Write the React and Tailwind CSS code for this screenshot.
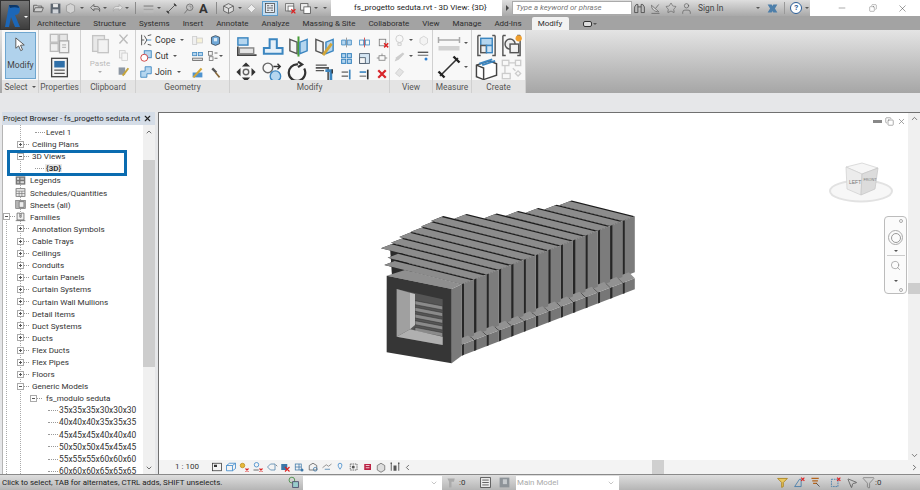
import React from 'react'
import { ChevronDown, ChevronUp, ChevronLeft, ChevronRight, X, Minus, Copy, Star, User, Search, Filter, MousePointer2 } from 'lucide-react'

const Ic = ({ s = 14, c = '', children }) => (
  <svg width={s} height={s} viewBox="0 0 16 16" fill="none" className={`shrink-0 ${c}`}>{children}</svg>
)

const Drop = ({ c = '' }) => <span className={`inline-block w-0 h-0 border-x-[2px] border-x-transparent border-t-[2px] border-t-[#555] shrink-0 ${c}`} />

const B = '#3c86c0'
const BF = '#b5d6ef'

/* quick access + ribbon icons */
const icons = {
  open: <path d="M2 12V4h4l1 1h5v2M2 12l2-5h10l-2 5z" stroke="#555" fill="#cfcfcf" />,
  save: <><rect x="2" y="2" width="12" height="12" fill="#5d6670" /><rect x="5" y="2.5" width="6" height="4" fill="#e8e8e8" /><rect x="4.5" y="9" width="7" height="5" fill="#cfd3d8" /></>,
  sync: <path d="M8 2l5 2.5v7L8 14l-5-2.5v-7z" stroke="#999" fill="#d4d4d4" />,
  undo: <path d="M6 3L2 7l4 4V8.5h4c2 0 3 1 3 3 1-4-1-6-4-6H6z" stroke="#555" fill="#ccc" />,
  redo: <path d="M10 3l4 4-4 4V8.5H6c-2 0-3 1-3 3-1-4 1-6 4-6h3z" stroke="#aaa" fill="#e2e2e2" />,
  thin: <><path d="M2 5h12" stroke="#999" strokeWidth="2" /><path d="M2 9h12" stroke="#999" /><path d="M2 12h12" stroke="#bbb" strokeWidth="2" /></>,
  measure: <><path d="M3 13L13 3" stroke="#444" /><path d="M2 11l3 3M11 2l3 3" stroke="#333" strokeWidth="1.5" /></>,
  tag: <><circle cx="9.5" cy="6.5" r="4" stroke="#666" /><path d="M7 9l-4 5" stroke="#666" /><path d="M8 5h3v3" stroke="#888" /></>,
  home3d: <><path d="M8 2l6 3v6l-6 3-6-3V5z" stroke="#555" fill="#ddd" /><path d="M2 5l6 3 6-3M8 8v6" stroke="#555" /></>,
  section: <path d="M8 3l5 5-5 5-5-5z" stroke="#aaa" fill="#eee" />,
  thinList: <><rect x="2" y="2" width="12" height="12" stroke="#444" fill="#e8eef5" /><path d="M4 5h3M9 5h3M4 8h8M4 11h3M9 11h3" stroke="#333" /></>,
  close: <><rect x="2" y="2" width="10" height="9" stroke="#666" fill="#eee" /><rect x="5" y="5" width="7" height="6" stroke="#666" fill="#fff" /><path d="M9 9l5 5M14 9l-5 5" stroke="#d22" strokeWidth="1.6" /></>,
  windows: <><rect x="2" y="2" width="9" height="8" stroke="#555" fill="#eee" /><rect x="6" y="6" width="8" height="8" stroke="#555" fill="#fff" /></>,
  binoc: <><path d="M2 13V6l2-3h2v10zM14 13V6l-2-3h-2v10z" stroke="#444" fill="#bbb" /><path d="M6 6h4" stroke="#444" /></>,
  dish: <><path d="M3 4c0 5 4 8 9 8z" stroke="#666" fill="#ddd" /><path d="M8 8l4-5M3 14h10" stroke="#666" /></>,
  xchg: <path d="M2 3h5l1 2 1-2h5l-3 5 3 5H9l-1-2-1 2H2l3-5z" fill="#4d7faa" />,
  cursor: <path d="M3 1l0 11 3-2.5 2.2 5 2-.9-2.2-4.8 4-.3z" stroke="#555" fill="#fff" />,
  props: <><rect x="2" y="1" width="12" height="14" stroke="#444" fill="#f4f4f4" /><rect x="4" y="3" width="8" height="5" fill="#2f6fa8" /><path d="M4 10h8M4 12.5h8" stroke="#555" /></>,
  typeProps: <><rect x="1" y="1" width="6" height="6" stroke="#bbb" fill="#eee" /><rect x="8" y="1" width="6" height="6" stroke="#bbb" fill="#e6e6e6" /><rect x="1" y="8" width="6" height="6" stroke="#bbb" fill="#eee" /><rect x="8" y="6" width="7" height="9" stroke="#aaa" fill="#f2f2f2" /><path d="M10 9h3M10 11h3" stroke="#bbb" /></>,
  paste: <><rect x="2" y="2" width="9" height="12" stroke="#c4c4c4" fill="#e8e8e8" /><rect x="6" y="5" width="8" height="10" stroke="#c4c4c4" fill="#f2f2f2" /></>,
  cut: <path d="M3 2l10 11M13 2L3 13" stroke="#bbb" strokeWidth="1.8" />,
  copy: <><rect x="3" y="2" width="7" height="9" stroke="#ccc" fill="#f2f2f2" /><rect x="6" y="5" width="7" height="9" stroke="#ccc" fill="#f6f6f6" /></>,
  match: <><rect x="2" y="3" width="8" height="9" fill="#8d97a3" /><path d="M7 13L14 4" stroke="#c8a63a" strokeWidth="2.4" /></>,
  cope: <><path d="M3 2v12M3 8h3M6 3l3 5-3 5" stroke="#444" /><path d="M10 3l4-1M10 13l4 1" stroke="#444" /><path d="M9 8h5" stroke={B} /></>,
  cutG: <><rect x="6" y="2" width="8" height="8" stroke={B} fill={BF} /><circle cx="6" cy="10" r="4" stroke="#c33" fill="#fff" /></>,
  join: <path d="M7 2h7v8H9v4H2V7h5z" stroke={B} fill={BF} />,
  wall: <><rect x="2" y="3" width="5" height="10" stroke="#ccc" fill="#f0f0f0" /><rect x="7" y="5" width="7" height="6" stroke="#ccc" fill="#f7f2d8" /></>,
  face: <><path d="M3 4l5-2 5 2v8l-5 2-5-2z" stroke="#345" fill="#6ea6d6" /><rect x="6" y="5" width="4" height="4" fill="#dbeaf6" /></>,
  split: <><rect x="2" y="3" width="5" height="4" stroke={B} fill={BF} /><rect x="9" y="3" width="5" height="4" stroke={B} fill={BF} /><rect x="2" y="10" width="12" height="3" stroke="#666" fill="#ddd" /></>,
  wallj: <><rect x="2" y="2" width="5" height="5" stroke="#666" /><rect x="3" y="9" width="5" height="5" stroke="#666" /><path d="M10 4h4M10 11h4" stroke="#444" /></>,
  paintH: <><rect x="2" y="8" width="12" height="6" fill="#4f93cf" /><path d="M3 14L13 3" stroke="#d2a63a" strokeWidth="2.6" /></>,
  hammer: <><path d="M4 3l5 5" stroke="#555" strokeWidth="3" /><path d="M8 8l5 6" stroke="#8a6a3a" strokeWidth="2" /></>,
  align: <><rect x="2" y="2" width="7" height="5" stroke={B} fill={BF} /><path d="M2 8v6h13" stroke="#444" strokeWidth="1.2" /><rect x="3" y="9" width="10" height="4" fill="#e4e4e4" stroke="#888" /></>,
  offset: <path d="M2 13V9h4V3h5v6h4v4z" stroke={B} fill="#e6f0f8" strokeWidth="1.4" />,
  mirror1: <><path d="M2 3l5 2v8l-5-2z" stroke="#555" fill="#f5f5f5" /><path d="M8 1v14" stroke="#4a9d3a" strokeWidth="1.4" /><path d="M14 3l-5 2v8l5-2z" stroke={B} fill={BF} /></>,
  mirror2: <><path d="M2 3l5 2v8l-5-2z" stroke="#555" fill="#f5f5f5" /><path d="M14 3l-5 2v8l5-2z" stroke={B} fill={BF} /><path d="M7 14l6-8" stroke="#d2a63a" strokeWidth="2" /></>,
  move: <><path d="M8 1l3 3H5zM8 15l-3-3h6zM1 8l3-3v6zM15 8l-3 3V5z" fill="#333" /><circle cx="8" cy="8" r="2" stroke="#666" /></>,
  copyM: <><circle cx="5" cy="5" r="3.5" stroke="#666" /><circle cx="10.5" cy="11" r="3.8" stroke={B} fill={BF} /><path d="M9 4h5M12 2l2 2-2 2" stroke="#333" /></>,
  rotate: <path d="M12.5 5.500A6 6 0 1 1 8 2.500M8 .5l3 2-3 2" stroke="#333" strokeWidth="1.6" />,
  trim: <><path d="M2 5h9v10" stroke="#555" strokeWidth="1.2" /><path d="M2 3h8M2 7h6" stroke="#555" /><path d="M9 7h4v8" stroke={B} strokeWidth="2" /><path d="M14 9V6" stroke="#333" /></>,
  sm1: <><path d="M8 2v12" stroke="#888" /><path d="M2 5h5v6H2zM9 5h5v6H9z" stroke={B} fill={BF} /></>,
  sm2: <><path d="M8 2v12" stroke="#c33" /><rect x="2" y="5" width="5" height="6" stroke={B} /><rect x="9" y="5" width="5" height="6" stroke={B} /></>,
  sm3: <><rect x="4" y="4" width="8" height="8" stroke="#777" /><path d="M10 9l5 5M15 9l-5 5" stroke="#d22" strokeWidth="1.8" /></>,
  array: <><rect x="2" y="2" width="5" height="5" stroke={B} fill={BF} strokeWidth="1.3" /><rect x="9" y="2" width="5" height="5" stroke={B} fill={BF} strokeWidth="1.3" /><rect x="2" y="9" width="5" height="5" stroke={B} fill={BF} strokeWidth="1.3" /><rect x="9" y="9" width="5" height="5" stroke={B} fill={BF} strokeWidth="1.3" /></>,
  scale: <><rect x="2" y="2" width="12" height="12" stroke="#456" fill="#d5e6f3" /><rect x="2" y="7" width="7" height="7" stroke="#456" fill="#f5f5f5" /></>,
  pin: <><rect x="4" y="5" width="8" height="6" stroke="#777" /><path d="M1 8h3M12 8h3M8 2v3" stroke="#777" /></>,
  tr1: <><path d="M2 5h8M2 10h8" stroke="#333" strokeWidth="1.2" /><path d="M12 2v12" stroke={B} strokeWidth="2" /></>,
  tr2: <><path d="M2 5h8" stroke={B} strokeWidth="2" /><path d="M2 10h8" stroke="#333" /><path d="M12 2v12" stroke="#333" strokeWidth="2" /></>,
  del: <path d="M3 3l10 10M13 3L3 13" stroke="#d8262c" strokeWidth="3" />,
  bulb: <><circle cx="8" cy="6" r="4.500" stroke="#c8c8c8" fill="#f8f8f8" /><path d="M6 11h4v3H6z" stroke="#c8c8c8" /></>,
  boxes: <path d="M4 6l5-3 5 3v6l-5 3-5-3z" stroke="#ccc" fill="#f3f3f3" />,
  pen: <path d="M2 14l2-5 8-6 2 2-7 7z" fill="#cdcdcd" />,
  lines: <><path d="M1 3h14" stroke="#333" strokeWidth="1.5" /><path d="M1 7h14" stroke="#555" strokeWidth="1.2" /><circle cx="12" cy="12" r="2" fill="#2f7fd0" /></>,
  eraser: <path d="M3 9l5-6 5 4-5 6z" stroke="#ccc" fill="#e4e4e4" />,
  dim: <><path d="M1 6h14M1 4v4M15 4v4" stroke="#aaa" /><rect x="1" y="10" width="14" height="3" fill="#d2d2d2" /></>,
  tape: <><path d="M2 14L14 2" stroke="#333" strokeWidth="1.1" /><path d="M1 11l4 4M11 1l4 4" stroke="#222" strokeWidth="1.6" /></>,
  parts: <><path d="M2 1h2M2 1v14h2M14 1h-2M14 1v14h-2" stroke="#555" /><rect x="4" y="3" width="8" height="5" stroke={B} fill={BF} /><rect x="4" y="8" width="4" height="5" stroke="#555" fill="#eee" /><rect x="8" y="8" width="4" height="5" stroke={B} fill="#cfe3f3" /></>,
  group: <><path d="M2 1h2M2 1v14h2M14 1h-2M14 1v14h-2" stroke="#555" /><circle cx="7" cy="7" r="3.500" stroke="#555" fill="#eee" /><rect x="7" y="7" width="6" height="6" stroke="#555" fill="#f2f2f2" /><circle cx="13" cy="3" r="2.200" fill="#f0a030" /></>,
  stack: <><path d="M1 5l9-3 5 2v8l-9 3-5-2z" stroke="#444" fill="#fff" /><path d="M3 4l9-3M5 5l9-3" stroke={B} strokeWidth="1.3" /><path d="M1 5l5 2v8" stroke="#444" /></>,
  flow: <><rect x="1" y="1" width="5" height="4" stroke="#ccc" /><rect x="11" y="1" width="4" height="4" stroke="#ccc" /><rect x="1" y="11" width="6" height="4" stroke="#ccc" /><path d="M11 11l2-2 2 2-2 2z" stroke="#ccc" /><path d="M6 3h5M3 5v6M9 7l2 2" stroke="#ccc" /></>,
}

const Q = ({ n, s = 13, c = '' }) => <Ic s={s} c={c}>{icons[n]}</Ic>

function PanelLabel({ children, drop }) {
  return (
    <div className="h-[13px] pt-[1px] bg-[#e4e4e4] flex items-center justify-center gap-1 text-[8.4px] leading-none text-[#555] shrink-0 whitespace-nowrap">
      {children}
      {drop && <Drop />}
    </div>
  )
}

function Panel({ w, label, drop, children, c = '' }) {
  return (
    <div className={`flex flex-col h-full bg-[#f8f8f8] border-r border-[#d0d0d0] shrink-0 ${w}`}>
      <div className={`flex-1 min-h-0 ${c}`}>{children}</div>
      <PanelLabel drop={drop}>{label}</PanelLabel>
    </div>
  )
}

const tabs = ['Architecture', 'Structure', 'Systems', 'Insert', 'Annotate', 'Analyze', 'Massing & Site', 'Collaborate', 'View', 'Manage', 'Add-Ins']

function TopBar() {
  return (
    <div className="flex h-[30px] shrink-0 bg-[#a3a3a3]">
      <div className="w-[30px] h-[30px] bg-gradient-to-b from-[#777] to-[#3d3d3d] border border-[#333] flex items-center pl-[3px] shrink-0">
        <svg width="18" height="25" viewBox="0 0 18 25">
          <path d="M1 24L5 2h6c5 0 6 4 4 8-1 1-2 2-4 2l5 12h-5L7 14l-2 10z" fill="#1c67b8" />
          <path d="M5 2h6c3 0 4 1 4 3-3-1-6-1-9 0z" fill="#0d3768" />
        </svg>
        <Drop c="ml-[2px] mt-[3px] border-t-white" />
      </div>
      <div className="flex-1 flex flex-col min-w-0">
        <div className="h-[16px] flex bg-white">
          <div className="w-[301px] h-full bg-gradient-to-b from-[#dedede] to-[#a9a9a9] flex items-center pl-[2px] gap-[1px]">
            <Q n="open" /><Q n="save" c="ml-[3px]" /><Q n="sync" c="ml-[1px]" /><Drop c="mx-[2px]" /><Q n="undo" c="ml-[2px]" /><Drop /><Q n="redo" c="ml-[3px]" /><Drop />
            <span className="w-px h-[12px] bg-[#8a8a8a] mx-[5px]" />
            <Q n="thin" /><Drop c="mx-[1px]" /><Q n="measure" c="ml-[2px]" /><Q n="tag" c="ml-[3px]" />
            <span className="text-[13px] leading-none font-bold text-[#333] mx-[3px]">A</span>
            <span className="w-px h-[12px] bg-[#8a8a8a] mx-[4px]" />
            <Q n="home3d" /><Drop c="mx-[2px]" /><Q n="section" />
            <span className="ml-[3px] bg-[#c2dcf1] border border-[#5d9ccb] h-[15px] w-[16px] flex items-center justify-center"><Q n="thinList" s={12} /></span>
            <Q n="close" c="ml-[5px]" /><Q n="windows" c="ml-[1px]" /><Drop c="ml-[1px]" /><Drop c="ml-[4px]" />
          </div>
          <div className="w-[171px] flex items-center pl-[23px] text-[8px] leading-none text-[#222] whitespace-nowrap">fs_progetto seduta.rvt - 3D View: {'{3D}'}</div>
          <div className="w-[308px] h-full bg-gradient-to-b from-[#dedede] to-[#a9a9a9] flex items-center shrink-0">
            <span className="w-[10px] flex justify-center"><span className="w-0 h-0 border-y-[3px] border-y-transparent border-l-[3px] border-l-[#444]" /></span>
            <div className="w-[120px] h-[14px] bg-white border border-[#aaa] flex items-center pl-[3px] text-[7.8px] leading-none italic text-[#777] whitespace-nowrap">Type a keyword or phrase</div>
            <Q n="binoc" c="ml-[1px]" /><Q n="dish" c="ml-[3px]" />
            <Star size={12} strokeWidth={1} className="ml-[3px] text-[#444] shrink-0" /><User size={13} strokeWidth={1} className="ml-[3px] text-[#444] shrink-0" />
            <span className="ml-[5px] text-[8.4px] leading-none text-[#444] whitespace-nowrap">Sign In</span>
            <Drop c="ml-[33px]" /><Q n="xchg" c="ml-[6px]" />
            <span className="w-px h-[12px] bg-[#999] ml-[5px]" />
            <span className="ml-[5px] w-[12px] h-[12px] rounded-full border border-[#2b5d96] bg-white text-[8px] leading-none font-bold text-[#2b5d96] flex items-center justify-center shrink-0">?</span>
            <Drop c="ml-[3px]" />
          </div>
          <div className="flex-1 flex items-center text-[#333]">
            <Minus size={10} strokeWidth={1} className="ml-[27px]" />
            <Copy size={8} strokeWidth={1} className="ml-[22px] -scale-x-100" />
            <X size={11} strokeWidth={1} className="ml-[20px]" />
          </div>
        </div>
        <div className="h-[14px] flex items-end text-[8px] leading-none text-[#2e2e2e] whitespace-nowrap pl-[7px] gap-[13px]">
          {tabs.map((t) => <span key={t} className="pb-[2px]">{t}</span>)}
          <span className="w-[37px] h-[13px] bg-[#f2f2f2] rounded-t-[2px] flex items-center justify-center -ml-[3px]">Modify</span>
          <span className="ml-[1px] pb-[3px] flex items-center gap-[1px]"><span className="w-[9px] h-[6px] rounded-[2px] border border-[#333] bg-[#ddd]" /><Drop /></span>
        </div>
      </div>
    </div>
  )
}

const Row3 = ({ n, label }) => (
  <div className="flex items-center h-[16px] gap-[2px]">
    <Q n={n} s={14} />
    <span className="text-[8.8px] leading-none text-[#333]">{label}</span>
    <Drop c="ml-[3px]" />
  </div>
)

function Ribbon() {
  return (
    <div className="h-[63px] shrink-0 flex bg-gradient-to-b from-[#e4e4e4] to-[#a6a6a6] pl-[2px]">
      <Panel w="w-[37px]" label="Select" drop c="p-[2px_2px_0_3px]">
        <div className="h-[47px] bg-[#b0d2ec] border border-[#6fa6cf] flex flex-col items-center pt-[4px]">
          <Q n="cursor" s={15} />
          <span className="text-[8.6px] leading-none text-[#444] mt-[9px]">Modify</span>
        </div>
      </Panel>
      <Panel w="w-[42px]" label="Properties" c="flex flex-col items-center pt-[3px] gap-[3px]">
        <Q n="typeProps" s={21} />
        <Q n="props" s={21} />
      </Panel>
      <Panel w="w-[55px]" label="Clipboard" c="flex pl-[8px] pt-[3px]">
        <div className="flex flex-col items-center w-[22px]">
          <Q n="paste" s={21} />
          <span className="text-[8px] leading-none text-[#bbb] mt-[6px]">Paste</span>
          <Drop c="mt-[3px] border-t-[#aaa]" />
        </div>
        <div className="flex flex-col ml-[6px] gap-[3px]">
          <Q n="cut" /><Q n="copy" /><Q n="match" />
        </div>
      </Panel>
      <Panel w="w-[94px]" label="Geometry" c="flex pl-[3px] pt-[2px]">
        <div className="flex flex-col w-[48px]">
          <Row3 n="cope" label="Cope" /><Row3 n="cutG" label="Cut" /><Row3 n="join" label="Join" />
        </div>
        <div className="grid grid-cols-[20px_16px] auto-rows-[16px] items-center justify-items-center">
          <Q n="wall" /><Q n="face" />
          <Q n="split" /><span className="flex items-center"><Q n="wallj" s={12} /><Drop /></span>
          <Q n="paintH" /><Q n="hammer" />
        </div>
      </Panel>
      <Panel w="w-[160px]" label="Modify" c="flex pl-[3px] pt-[4px]">
        <div className="grid grid-cols-[26px_26px_26px_26px] auto-rows-[25px] justify-items-center items-center">
          <Q n="align" s={23} /><Q n="offset" s={23} /><Q n="mirror1" s={23} /><Q n="mirror2" s={23} />
          <Q n="move" s={22} /><Q n="copyM" s={22} /><Q n="rotate" s={22} /><Q n="trim" s={22} />
        </div>
        <div className="grid grid-cols-[17px_18px_18px] auto-rows-[16px] justify-items-center items-center ml-[1px]">
          <Q n="sm1" /><Q n="sm2" /><Q n="sm3" s={13} />
          <Q n="array" /><Q n="scale" /><Q n="pin" s={12} />
          <Q n="tr1" /><Q n="tr2" /><Q n="del" s={12} />
        </div>
      </Panel>
      <Panel w="w-[43px]" label="View" c="flex flex-col pl-[3px] pt-[2px]">
        <div className="flex items-center h-[16px]"><Q n="bulb" /><Drop c="ml-[3px]" /><Q n="boxes" s={12} c="ml-[4px]" /></div>
        <div className="flex items-center h-[16px]"><Q n="pen" /><Drop c="ml-[3px]" /><Q n="lines" s={12} c="ml-[4px]" /></div>
        <div className="flex items-center h-[16px]"><Q n="eraser" /></div>
      </Panel>
      <Panel w="w-[39px]" label="Measure" c="flex flex-col pl-[4px] pt-[3px]">
        <div className="flex items-center h-[20px]"><Q n="dim" s={24} /><Drop c="ml-[3px]" /></div>
        <div className="flex items-center mt-[3px] h-[22px]"><Q n="tape" s={24} /><Drop c="ml-[3px]" /></div>
      </Panel>
      <Panel w="w-[54px]" label="Create" c="grid grid-cols-[25px_25px] auto-rows-[24px] pl-[2px] pt-[3px] items-center justify-items-center">
        <Q n="parts" s={23} /><Q n="group" s={23} />
        <Q n="stack" s={23} /><Q n="flow" s={21} />
      </Panel>
    </div>
  )
}

const tree = [
  ['l3', 'Level 1'], ['p', 'Ceiling Plans'], ['m', '3D Views'], ['sel', '{3D}'],
  ['i', 'Legends', 'legend'], ['i', 'Schedules/Quantities', 'sched'], ['i', 'Sheets (all)', 'sheet'], ['f', 'Families', 'fam'],
  ['p', 'Annotation Symbols'], ['p', 'Cable Trays'], ['p', 'Ceilings'], ['p', 'Conduits'], ['p', 'Curtain Panels'], ['p', 'Curtain Systems'],
  ['p', 'Curtain Wall Mullions'], ['p', 'Detail Items'], ['p', 'Duct Systems'], ['p', 'Ducts'], ['p', 'Flex Ducts'], ['p', 'Flex Pipes'], ['p', 'Floors'],
  ['m', 'Generic Models'], ['m2', 'fs_modulo seduta'],
  ['t', '35x35x35x30x30x30'], ['t', '40x40x40x35x35x35'], ['t', '45x45x45x40x40x40'], ['t', '50x50x50x45x45x45'], ['t', '55x55x55x60x60x60'], ['t', '60x60x60x65x65x65'],
]

const Exp = ({ open }) => (
  <span className="w-[7px] h-[7px] border border-[#aaa] bg-white shrink-0 relative">
    <span className="absolute left-[1px] right-[1px] top-[2px] h-px bg-[#555]" />
    {!open && <span className="absolute top-[1px] bottom-[1px] left-[2px] w-px bg-[#555]" />}
  </span>
)

const Dash = ({ w }) => <span className={`border-t border-dotted border-[#999] shrink-0 ${w}`} />

const TreeIcon = ({ k }) => (
  <Ic s={11}>
    {k === 'legend' && <><rect x="1" y="2" width="14" height="12" fill="#777" /><rect x="3" y="4" width="3" height="3" fill="#ddd" /><rect x="8" y="4" width="5" height="3" fill="#bbb" /><rect x="3" y="9" width="3" height="3" fill="#bbb" /><rect x="8" y="9" width="5" height="3" fill="#ddd" /></>}
    {k === 'sched' && <><rect x="1.5" y="2.5" width="13" height="11" stroke="#555" fill="#eee" /><path d="M1.5 6h13M1.5 9.5h13M6 6v8M10 6v8" stroke="#777" /></>}
    {k === 'sheet' && <><rect x="1" y="2" width="14" height="12" fill="#b5b5b5" stroke="#777" /><rect x="6" y="4" width="7" height="8" fill="#eee" stroke="#666" /></>}
    {k === 'fam' && <><path d="M3 13V3h4v6h2V3h4v10z" stroke="#555" fill="#f2f2f2" /><path d="M1 14h14" stroke="#555" /></>}
  </Ic>
)

function TreeRow({ row }) {
  const [k, label, icon] = row
  return (
    <div className="h-[12.12px] flex items-center text-[8.1px] leading-none text-[#333] whitespace-nowrap">
      {k === 'l3' && <><span className="w-[32px]" /><Dash w="w-[10px]" /><span className="ml-[1px]">{label}</span></>}
      {k === 'p' && <><span className="w-[14px]" /><Exp /><Dash w="w-[5px]" /><span className="ml-[3px]">{label}</span></>}
      {k === 'm' && <><span className="w-[14px]" /><Exp open /><Dash w="w-[5px]" /><span className="ml-[3px]">{label}</span></>}
      {k === 'sel' && <><span className="w-[32px]" /><Dash w="w-[9px]" /><span className="ml-[1px] px-[1px] bg-[#e8e8e8] font-bold">{label}</span></>}
      {k === 'i' && <><span className="w-[12px]" /><TreeIcon k={icon} /><span className="ml-[4px]">{label}</span></>}
      {k === 'f' && <><span className="w-[0px]" /><Exp open /><Dash w="w-[5px]" /><TreeIcon k={icon} /><span className="ml-[4px]">{label}</span></>}
      {k === 'm2' && <><span className="w-[27px]" /><Exp open /><Dash w="w-[5px]" /><span className="ml-[4px]">{label}</span></>}
      {k === 't' && <><span className="w-[45px]" /><Dash w="w-[10px]" /><span className="ml-[1px] text-[8.4px]">{label}</span></>}
    </div>
  )
}

function ProjectBrowser() {
  return (
    <div className="w-[153px] ml-[2px] shrink-0 flex flex-col relative">
      <div className="h-[13px] bg-[#d5dde7] flex items-center justify-between pl-[1px] pr-[3px] text-[7.8px] leading-none text-[#222] whitespace-nowrap">
        <span>Project Browser - fs_progetto seduta.rvt</span>
        <X size={9} strokeWidth={3} className="text-[#222] shrink-0" />
      </div>
      <div className="flex-1 min-h-0 flex bg-white border-l border-[#b5b5b5]">
        <div className="flex-1 min-w-0 overflow-hidden relative pt-[1px]">
          <span className="absolute left-[17px] top-0 bottom-0 border-l border-dotted border-[#aaa]" />
          <span className="absolute left-[3px] top-[96px] bottom-0 border-l border-dotted border-[#aaa]" />
          <div className="relative">
            {tree.map((r) => <TreeRow key={r[1]} row={r} />)}
          </div>
        </div>
        <div className="w-[12px] shrink-0 bg-[#f0f0f0] flex flex-col items-center justify-between pt-[3px] pb-[2px]">
          <ChevronUp size={8} strokeWidth={2.5} className="text-[#555] shrink-0" />
          <div className="absolute right-[0px] top-[48px] w-[12px] h-[207px] bg-[#cdcdcd]" />
          <ChevronDown size={8} strokeWidth={2.5} className="text-[#555] shrink-0" />
        </div>
      </div>
      <div className="absolute left-[5px] top-[38px] w-[120px] h-[26px] border-[3px] border-[#0b6cb0]" />
    </div>
  )
}

/* left end (x) of each slat's top face, front frame first */
const leftEnds = [80, 90, 70, 100, 125, 160, 190, 220, 290, 380, 445, 505, 560, 605]

function Model() {
  const R = (i) => [275 + i * 37.1, 283 - i * 14.6]
  const bottom = (x) => 497 - 0.383 * (x - 275)
  const h = 168
  const slope = 0.25
  const slats = []
  for (let i = 13; i >= 0; i--) {
    const a = R(i + 1)
    const b = R(i)
    const L = a[0] - leftEnds[i]
    const p = [a[0] - L, a[1] - slope * L]
    const q = [b[0] - L, b[1] - slope * L]
    const m = [a[0] - 6, a[1] + 2.4]
    const n = [p[0] - 6, p[1] + 2.4]
    const bA = bottom(a[0])
    const bB = bottom(b[0])
    const side = 33
    slats.push(
      <g key={i}>
        {/* top strip */}
        <polygon points={`${a[0]},${a[1]} ${b[0]},${b[1]} ${q[0]},${q[1]} ${p[0]},${p[1]}`} fill="#1c1c1c" />
        <polygon points={`${m[0]},${m[1]} ${b[0]},${b[1]} ${q[0]},${q[1]} ${n[0]},${n[1]}`} fill="#8c8c8c" />
        {/* right face */}
        <polygon points={`${b[0]},${b[1]} ${a[0]},${a[1]} ${a[0]},${a[1] + h} ${b[0]},${b[1] + h}`} fill="#7c7c7c" />
        <polygon points={`${b[0]},${b[1]} ${b[0] + 7},${b[1] - 2.8} ${b[0] + 7},${b[1] + h - 2.8} ${b[0]},${b[1] + h}`} fill="#262626" />
        {/* step at the foot */}
        <polygon points={`${b[0]},${bB - side} ${a[0]},${bA - side} ${a[0]},${bA} ${b[0]},${bB}`} fill="#777" />
        <polygon points={`${b[0]},${bB - side} ${b[0] + 7},${bB - side - 2.7} ${b[0] + 7},${bB - 2.7} ${b[0]},${bB}`} fill="#2a2a2a" />
        <polygon points={`${b[0]},${bB - side} ${a[0]},${bA - side} ${a[0] - 18},${a[1] + h} ${b[0] - 18},${b[1] + h}`} fill="#929292" />
        <path d={`M${b[0]} ${bB - side}L${b[0] - 18} ${b[1] + h}`} stroke="#1c1c1c" strokeWidth="3" />
      </g>
    )
  }
  return (
    <svg width="280" height="180" viewBox="0 0 840 540" className="shrink-0">
      <polygon points="60,172 92,162 130,250 66,258" fill="#2b2b2b" />
      {slats}
      {/* front frame */}
      <polygon points="245,297 275,283 275,497 245,520" fill="#7a7a7a" />
      <polygon points="50,257 105,240 275,283 245,297" fill="#8f8f8f" />
      <polygon points="50,257 245,297 245,520 50,487" fill="#363636" />
      <polygon points="80,297 218,328 218,465 80,440" fill="#555" />
      {[0, 1, 2, 3, 4].map((n) => (
        <polygon key={n} points={`135,${332 + n * 20} 218,${348 + n * 20} 218,${360 + n * 20} 135,${344 + n * 20}`} fill="#8a8a8a" stroke="#2d2d2d" strokeWidth="1.5" />
      ))}
      <polygon points="120,308 135,312 135,405 120,418" fill="#c2c2c2" />
      <polygon points="80,440 120,418 218,440 218,465" fill="#b0b0b0" />
      <polygon points="80,297 120,308 120,418 80,440" fill="#a0a0a0" />
    </svg>
  )
}

function ViewCube() {
  return (
    <svg width="72" height="46" viewBox="0 0 72 46" className="absolute right-[11px] top-[47px]">
      <ellipse cx="36" cy="31" rx="31" ry="10.500" fill="#f7f7f7" stroke="#e2e2e2" strokeWidth="2" />
      <path d="M21 7l16-4 16 5-16 6z" fill="#f6f6f6" stroke="#cfcfcf" strokeWidth=".7" />
      <path d="M21 7l16 7-1 21-14-6z" fill="#ececec" stroke="#cfcfcf" strokeWidth=".7" />
      <path d="M37 14l16-6-3 21-14 6z" fill="#dcdcdc" stroke="#c4c4c4" strokeWidth=".7" />
      <text x="24" y="24" fontSize="5" fill="#777" fontFamily="Liberation Sans, sans-serif">LEFT</text>
      <text x="38.500" y="21" fontSize="3.800" fill="#777" fontFamily="Liberation Sans, sans-serif">FRONT</text>
    </svg>
  )
}

function NavBar() {
  return (
    <div className="absolute right-[1px] top-[103px] w-[23px] h-[78px] border border-[#bcbcbc] rounded-[4px] bg-[#fbfbfb] flex flex-col items-center pt-[2px]">
      <span className="self-end mr-[3px] w-[4px] h-[4px] rounded-full border border-[#aaa]" />
      <span className="mt-[7px] w-[15px] h-[15px] rounded-full border border-[#aaa] flex items-center justify-center"><span className="w-[10px] h-[10px] rounded-full border border-[#999]" /></span>
      <Drop c="mt-[5px]" />
      <span className="w-[18px] h-px bg-[#ccc] mt-[3px]" />
      <Search size={11} strokeWidth={1.2} className="mt-[4px] text-[#777]" />
      <Drop c="mt-[9px]" />
      <span className="self-end mr-[3px] mt-auto mb-[1px] w-[4px] h-[4px] rounded-full border border-[#aaa]" />
    </div>
  )
}

const vbDraw = {
  sched: <><rect x="2" y="3" width="12" height="10" stroke="#333" /><rect x="4" y="5" width="4" height="3" fill="#333" /></>,
  cube: <path d="M2 6l4-3h8v7l-4 3H2zM2 6h8v7M10 6l4-3" stroke="#2f80c8" />,
  sun: <><circle cx="6" cy="6" r="3" fill="#e6b93a" stroke="#b98a1a" /><path d="M10 10l4 4M14 10l-4 4" stroke="#d22" strokeWidth="1.5" /></>,
  shadow: <><circle cx="6" cy="5" r="3" stroke="#2f80c8" /><path d="M2 12h7" stroke="#444" /><path d="M10 10l4 4M14 10l-4 4" stroke="#d22" strokeWidth="1.5" /></>,
  a: <><path d="M2 8l4-4h6v8H6z" stroke="#4a7fa8" /><path d="M13 5l2 2" stroke="#666" /></>,
  b: <><rect x="3" y="4" width="8" height="8" fill="#3c77a8" /><path d="M8 8l6 6M14 8l-6 6" stroke="#d22" strokeWidth="1.5" /></>,
  c: <><rect x="3" y="4" width="8" height="8" stroke="#3c77a8" /><path d="M8 4v8M3 8h8" stroke="#3c77a8" /><circle cx="12" cy="12" r="2" fill="#3c77a8" /></>,
  d: <><path d="M3 6l5-3 5 3v6H3z" stroke="#555" /><circle cx="11" cy="11" r="2.500" stroke="#3c77a8" /></>,
  e: <><path d="M2 9l5-4 3 2 4-3" stroke="#777" /><path d="M5 11h7" stroke="#3c77a8" /></>,
  f: <path d="M8 3a2.500 2.500 0 0 1 2.500 2.500C10.500 8 8 11 8 11S5.500 8 5.500 5.500A2.500 2.500 0 0 1 8 3z" stroke="#2f80c8" />,
  g: <><rect x="3" y="4" width="9" height="8" stroke="#444" strokeDasharray="2 1" /><circle cx="7" cy="8" r="2" fill="#555" /></>,
  h: <><rect x="3" y="4" width="9" height="8" fill="#b24" /><path d="M5 6h5M5 9h5" stroke="#fff" /></>,
  i: <path d="M3 6l5-3 5 3v6l-5 3-5-3z" stroke="#666" fill="#ddd" />,
  j: <><path d="M2 3h2M12 3h2M3 2v11M13 2v11" stroke="#333" /><rect x="6" y="6" width="4" height="7" fill="#555" /></>,
}

function ViewBar() {
  return (
    <div className="h-[14px] shrink-0 flex items-center bg-[#f3f3f3] text-[#333]">
      <span className="text-[8px] leading-none whitespace-nowrap ml-[16px] w-[36px]">1 : 100</span>
      <div className="flex gap-[1.7px]">
        {Object.keys(vbDraw).map((k) => <Ic key={k} s={12}>{vbDraw[k]}</Ic>)}
      </div>
      <ChevronLeft size={9} strokeWidth={2} className="ml-[2px] text-[#444]" />
      <div className="flex-1" />
      <div className="w-[12px] h-[14px] bg-[#cfcfcf] mr-[246px]" />
      <ChevronRight size={9} strokeWidth={2} className="mr-[1px] text-[#444]" />
    </div>
  )
}

function Viewport() {
  return (
    <div className="flex-1 min-w-0 ml-[3px] flex flex-col border-l border-t border-[#707070]">
      <div className="flex-1 min-h-0 flex">
        <div className="flex-1 min-w-0 bg-white relative pl-[211px] pt-[77px]">
          <Model />
          <div className="absolute right-[2px] top-[4px] flex items-center gap-[3px] text-[#666]">
            <span className="w-[9px] h-[3px] bg-[#888]" />
            <Copy size={9} strokeWidth={1.4} />
            <X size={9} strokeWidth={2} className="text-[#888]" />
          </div>
          <ViewCube />
          <NavBar />
        </div>
        <div className="w-[12px] shrink-0 bg-[#f0f0f0] flex flex-col items-center relative pt-[1px]">
          <ChevronUp size={9} strokeWidth={2} className="text-[#555]" />
          <div className="absolute top-[170px] w-[12px] h-[11px] bg-[#cdcdcd]" />
          <ChevronDown size={9} strokeWidth={2} className="text-[#555] mt-auto" />
        </div>
      </div>
      <ViewBar />
    </div>
  )
}

const StatusIc = ({ children, c = '' }) => <Ic s={13} c={c}>{children}</Ic>

function StatusBar() {
  return (
    <div className="h-[16px] shrink-0 flex items-center bg-gradient-to-b from-[#dedede] to-[#b5b5b5] text-[7.9px] leading-none text-[#222] whitespace-nowrap border-t border-[#8a8a8a]">
      <span className="w-[287px] pl-[2px]">Click to select, TAB for alternates, CTRL adds, SHIFT unselects.</span>
      <StatusIc><circle cx="6" cy="5" r="3.500" stroke="#3c8a3c" /><rect x="7" y="7" width="7" height="7" stroke="#446" fill="#9cc" /></StatusIc>
      <div className="ml-[3px] w-[139px] h-[14px] bg-white flex items-center justify-end pr-[4px]"><ChevronDown size={8} className="text-[#aaa]" /></div>
      <StatusIc c="ml-[3px]"><path d="M3 3h9l-1 4H8v7H5V7z" fill="#aaa" /></StatusIc>
      <span className="ml-[1px] text-[#333] w-[8px]">:0</span>
      <StatusIc c="ml-[12px]"><rect x="2" y="2" width="12" height="12" stroke="#444" fill="#eee" /><path d="M4 5h8M4 8h8M4 11h8" stroke="#444" /></StatusIc>
      <StatusIc c="ml-[6px]"><rect x="2" y="2" width="12" height="12" fill="#8d9398" /><rect x="6" y="4" width="5" height="6" fill="#c5c9cc" /></StatusIc>
      <div className="ml-[5px] w-[103px] h-[14px] bg-white flex items-center justify-between pl-[1px] pr-[4px] text-[#aaa]">Main Model<ChevronDown size={8} className="text-[#aaa]" /></div>
      <div className="flex-1" />
      <StatusIc><path d="M2 3h12L9 8v5l-2 1V8z" stroke="#a87e18" fill="#e8c860" /></StatusIc>
      <StatusIc c="ml-[4px]"><path d="M2 13L8 4h2v9z" stroke="#3c77a8" /><path d="M10 2l4 4M14 2l-4 4" stroke="#d22" strokeWidth="1.4" /></StatusIc>
      <StatusIc c="ml-[3px]"><path d="M3 3h9M4 6h7M5 9h5" stroke="#b5651d" strokeWidth="1.5" /><path d="M9 9l4 4" stroke="#444" /></StatusIc>
      <StatusIc c="ml-[7px]"><rect x="3" y="4" width="8" height="9" stroke="#3c77a8" strokeDasharray="2 1" /><path d="M10 2l4 4M14 2l-4 4" stroke="#d22" strokeWidth="1.4" /></StatusIc>
      <MousePointer2 size={12} strokeWidth={1.2} className="ml-[4px] text-[#333]" />
      <Filter size={13} strokeWidth={1} className="ml-[4px] text-[#555]" />
      <span className="text-[#333] w-[8px] mr-[37px]">:0</span>
    </div>
  )
}

export default function App() {
  return (
    <div className="w-[920px] h-[490px] overflow-hidden flex flex-col bg-[#e6e7e9] font-['Roboto',sans-serif]">
      <TopBar />
      <Ribbon />
      <div className="h-[19px] shrink-0 bg-[#e6e7e9]" />
      <div className="flex-1 min-h-0 flex">
        <ProjectBrowser />
        <Viewport />
      </div>
      <StatusBar />
    </div>
  )
}
